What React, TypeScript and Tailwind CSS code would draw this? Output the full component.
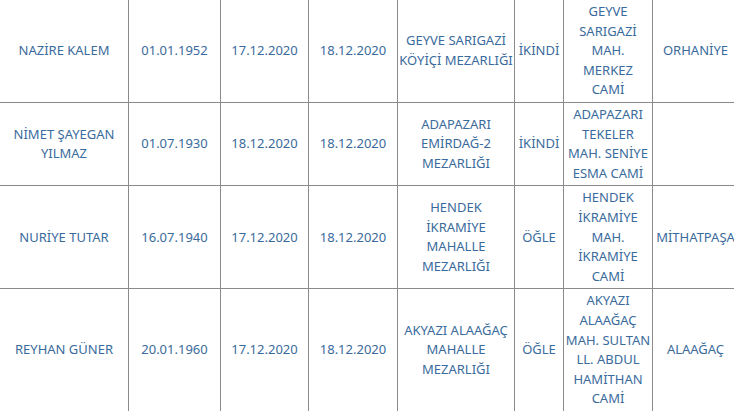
import React from "react";

// each cell is written as the lines it wraps into on the page
type Lines = string[];

interface Burial {
  name: Lines;
  born: string;
  died: string;
  buried: string;
  cemetery: Lines;
  prayer: string;
  mosque: Lines;
  district: string;
}

const rows: Burial[] = [
  {
    name: ["NAZİRE KALEM"],
    born: "01.01.1952",
    died: "17.12.2020",
    buried: "18.12.2020",
    cemetery: ["GEYVE SARIGAZİ", "KÖYİÇİ MEZARLIĞI"],
    prayer: "İKİNDİ",
    mosque: ["GEYVE", "SARIGAZİ", "MAH.", "MERKEZ", "CAMİ"],
    district: "ORHANİYE",
  },
  {
    name: ["NİMET ŞAYEGAN", "YILMAZ"],
    born: "01.07.1930",
    died: "18.12.2020",
    buried: "18.12.2020",
    cemetery: ["ADAPAZARI", "EMİRDAĞ-2", "MEZARLIĞI"],
    prayer: "İKİNDİ",
    mosque: ["ADAPAZARI", "TEKELER", "MAH. SENİYE", "ESMA CAMİ"],
    district: "",
  },
  {
    name: ["NURİYE TUTAR"],
    born: "16.07.1940",
    died: "17.12.2020",
    buried: "18.12.2020",
    cemetery: ["HENDEK", "İKRAMİYE", "MAHALLE", "MEZARLIĞI"],
    prayer: "ÖĞLE",
    mosque: ["HENDEK", "İKRAMİYE", "MAH.", "İKRAMİYE", "CAMİ"],
    district: "MİTHATPAŞA",
  },
  {
    name: ["REYHAN GÜNER"],
    born: "20.01.1960",
    died: "17.12.2020",
    buried: "18.12.2020",
    cemetery: ["AKYAZI ALAAĞAÇ", "MAHALLE", "MEZARLIĞI"],
    prayer: "ÖĞLE",
    mosque: ["AKYAZI", "ALAAĞAÇ", "MAH. SULTAN", "LL. ABDUL", "HAMİTHAN", "CAMİ"],
    district: "ALAAĞAÇ",
  },
];

const cell =
  "border border-[#8a8a8a] px-px py-[2px] text-center align-middle whitespace-nowrap";

const Multi = ({ lines }: { lines: Lines }) => (
  <>
    {lines.map((l, i) => (
      <span key={i} className="block">
        {l}
      </span>
    ))}
  </>
);

export default function App() {
  return (
    <div lang="tr" className="h-[411px] w-[734px] overflow-hidden bg-white">
      <table
        className="-ml-px -mt-px w-[739px] table-fixed border-collapse text-[13px] leading-[19.6px] text-[#3a6b9c]"
        style={{ fontFamily: '"Noto Sans", "Liberation Sans", sans-serif' }}
      >
        <colgroup>
          <col className="w-[129px]" />
          <col className="w-[92px]" />
          <col className="w-[88px]" />
          <col className="w-[89px]" />
          <col className="w-[117px]" />
          <col className="w-[49px]" />
          <col className="w-[89px]" />
          <col className="w-[86px]" />
        </colgroup>
        <tbody>
          {rows.map((r) => (
            <tr key={r.born + r.name[0]}>
              <td className={cell}>
                <Multi lines={r.name} />
              </td>
              <td className={cell}>{r.born}</td>
              <td className={cell}>{r.died}</td>
              <td className={cell}>{r.buried}</td>
              <td className={cell}>
                <Multi lines={r.cemetery} />
              </td>
              <td className={cell}>{r.prayer}</td>
              <td className={cell}>
                <Multi lines={r.mosque} />
              </td>
              <td className={cell}>{r.district}</td>
            </tr>
          ))}
        </tbody>
      </table>
    </div>
  );
}
